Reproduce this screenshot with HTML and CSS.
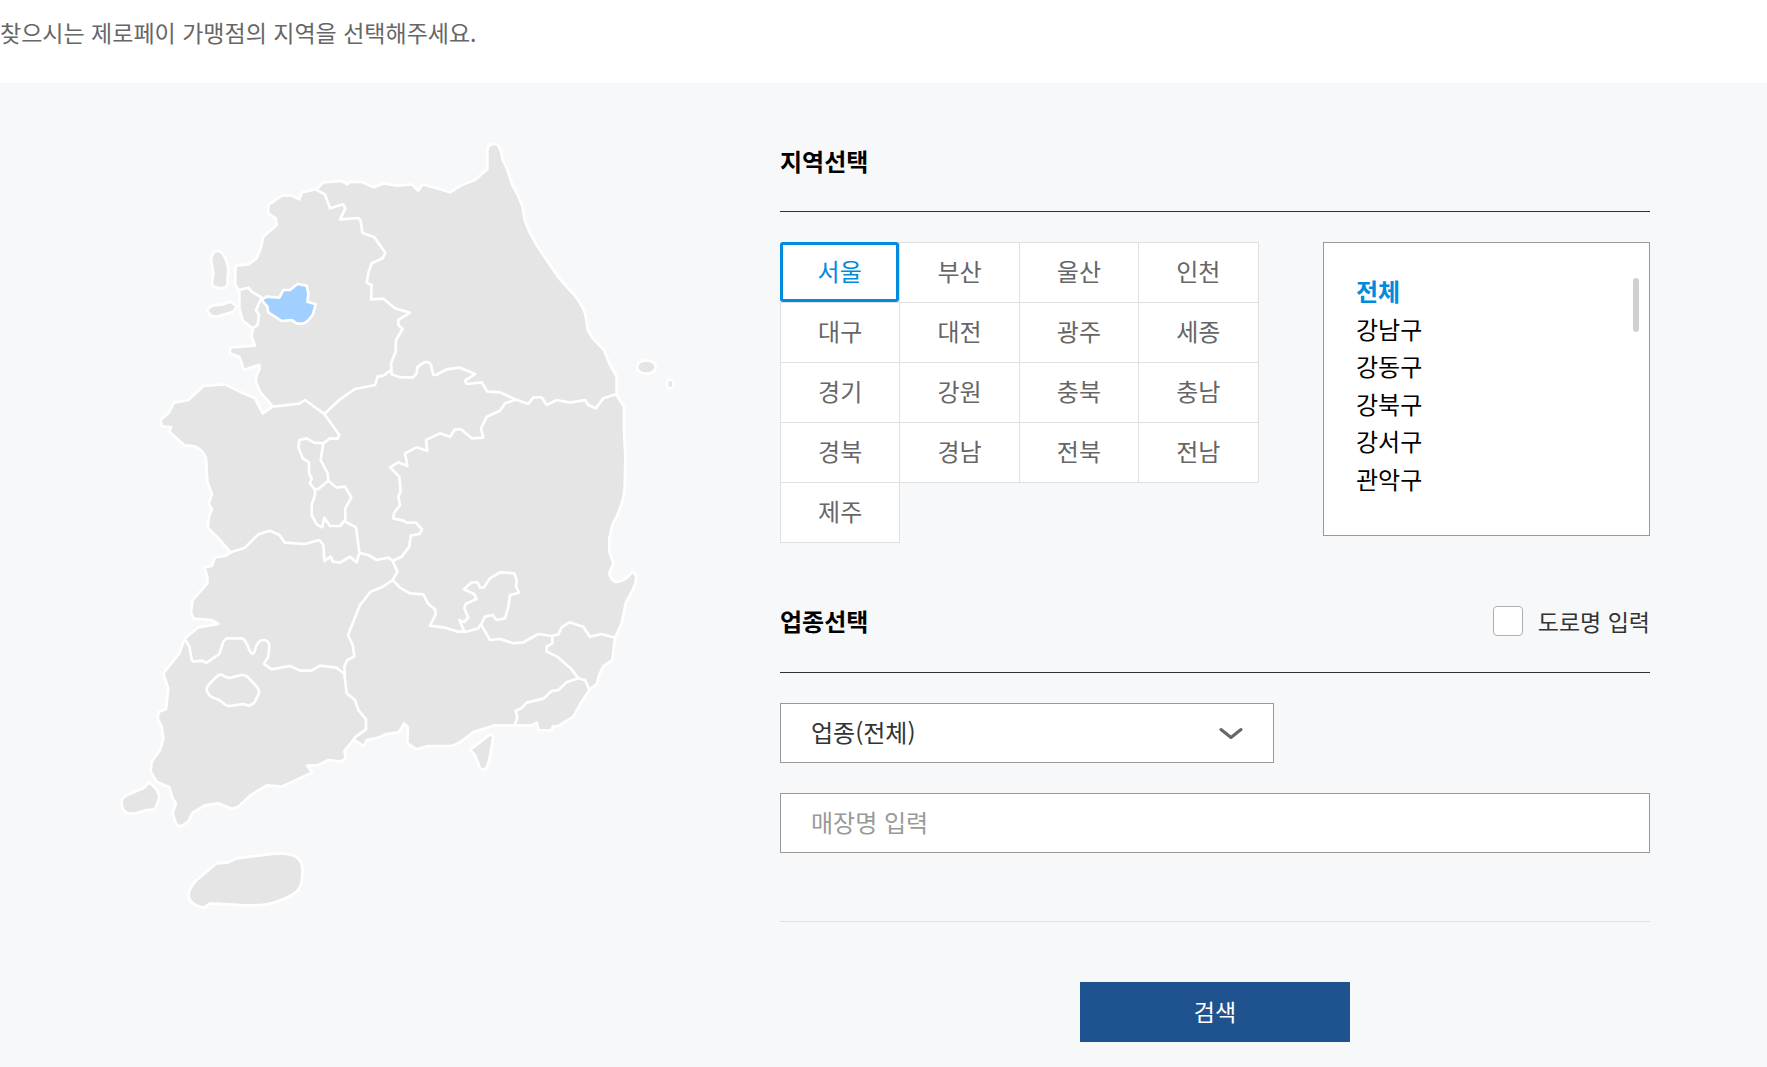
FILE: index.html
```html
<!DOCTYPE html>
<html lang="ko">
<head>
<meta charset="utf-8">
<meta name="viewport" content="width=device-width, initial-scale=1">
<title>제로페이 가맹점 찾기</title>
<link rel="stylesheet" href="styles.css">
</head>
<body>
<p class="intro">찾으시는 제로페이 가맹점의 지역을 선택해주세요.</p>
<main class="finder">
  <svg class="map" viewBox="351 429 1989 2310" role="img" aria-label="전국 지도">
    <!-- mainland -->
    <path class="land" d="M1462 508 1462 450Q1463 438 1472 434L1486 431Q1494 430 1503 455L1508 480 1522 508 1537 555 1552 582 1568 622 1574 660 1588 695 1610 735 1640 780 1675 832 1720 882Q1756 924 1759 960L1763 990 1778 1015 1812 1050 1830 1095 1850 1130 1850 1185 1872 1220 1872 1290 1876 1370 1874 1460Q1872 1512 1838 1572L1828 1615 1828 1655 1840 1690 1828 1720Q1834 1744 1850 1746 1876 1744 1897 1715 1910 1722 1908 1740 1906 1762 1878 1805L1865 1870 1845 1913 1837 1980 1810 1998 1797 2025 1790 2052 1770 2068 1745 2105 1720 2150 1675 2178 1658 2180 1655 2192 1615 2190 1610 2168 1595 2176 1485 2176 1420 2196Q1370 2238 1350 2238L1285 2238 1250 2248 1222 2230 1224 2182 1212 2170 1204 2185 1195 2197 1160 2202 1135 2213 1100 2220 1092 2238 1060 2220 1033 2253 1037 2275 1022 2285 985 2280 955 2295 922 2297 937 2317 845 2360 800 2356 750 2387 715 2420 695 2426 655 2410 615 2416 578 2438 565 2465 542 2480 528 2472 518 2440 528 2410 518 2395 508 2362 470 2345 452 2315 455 2285 480 2250 490 2215 485 2180 473 2155 477 2135 498 2128 505 2065 490 2020 538 1960 555 1915 595 1882 655 1872 635 1860 580 1856 573 1835 578 1800 622 1750 622 1730 613 1702 635 1698 645 1672 675 1668 692 1658 660 1620 623 1582 628 1545 636 1528 626 1510 636 1482 622 1445 618 1375Q602 1332 555 1337L508 1295 513 1282 485 1278 482 1260 505 1240 522 1208 565 1200 595 1172 610 1158 675 1153 720 1175 765 1195 788 1240 818 1220 780 1175 768 1145 770 1125 778 1108 778 1095 755 1102 732 1110 718 1070 688 1060 692 1042 765 1037 755 1010 758 985 728 962 718 925 718 875 705 850 707 797 745 793 770 775 782 745 790 710 830 675 827 655 805 640 805 615 845 587 875 587 898 598 905 577 950 567 970 547 1025 543 1042 553 1050 545 1085 546 1122 562 1152 550 1190 557 1235 553 1255 572 1268 553 1310 565 1350 577 1385 555 1425 540Z"/>
    <!-- province borders -->
    <g class="border">
      <path d="M950 570 975 583 990 625 1030 613 1036 625 1020 658 1075 654 1082 662 1087 698 1123 712 1156 758 1148 775 1115 790 1106 815 1100 848 1115 855 1113 898 1150 896 1185 925 1230 938 1195 960 1195 975 1208 987 1188 1020 1187 1055 1173 1090 1175 1123 1200 1132 1240 1132 1250 1120 1252 1102Q1284 1074 1293 1095L1300 1125 1308 1125 1340 1108 1380 1103 1425 1122 1395 1142 1400 1152 1445 1147 1462 1175 1500 1177 1545 1198 1585 1212 1600 1192 1625 1192 1640 1215 1670 1200 1710 1208 1755 1200 1765 1215 1787 1225 1810 1195 1850 1182"/>
      <path d="M1173 1110 1150 1127 1133 1130 1125 1155 1065 1167 1020 1198 973 1242M818 1220 898 1211 915 1200 973 1242 1018 1305 1013 1316 990 1315 970 1330 962 1380 983 1420 985 1442 955 1467 943 1467 930 1450 935 1435 927 1420 927 1387 908 1375 895 1342 898 1320 920 1315 942 1328 970 1330"/>
      <path d="M985 1442 1010 1463 1035 1460 1054 1492 1036 1525 1036 1560 1020 1578 990 1578 973 1553 967 1582 950 1573 935 1545 935 1515 945 1485 945 1468"/>
      <path d="M1036 1565 1068 1582 1078 1658 1070 1687 1050 1670 1020 1688 998 1685 992 1670 973 1683 970 1635 958 1620 915 1632 855 1628 838 1605 810 1592 775 1603 735 1643 692 1657"/>
      <path d="M1078 1658 1105 1665 1130 1680 1165 1673 1178 1682 1192 1715 1178 1740M1178 1682 1205 1670 1228 1640 1232 1607 1258 1602 1266 1588 1248 1568 1220 1568 1210 1562 1180 1555 1182 1540 1200 1515 1195 1490 1202 1475 1198 1430 1170 1402 1195 1387 1222 1398 1215 1360 1250 1342 1282 1353 1278 1320 1320 1300 1350 1310 1365 1288 1383 1288 1415 1315 1450 1313 1443 1285 1460 1250 1500 1232 1515 1210 1545 1200"/>
      <path d="M1178 1740 1145 1762 1112 1775 1080 1815 1060 1865 1044 1905 1058 1935 1063 1970 1042 1980 1033 2000 1035 2022"/>
      <path d="M1178 1740 1200 1763 1230 1780 1270 1783 1285 1812 1305 1828 1307 1843 1290 1877 1335 1883 1375 1895 1400 1895 1435 1885 1443 1873M1392 1892 1378 1860 1392 1866 1405 1853 1393 1825 1397 1812 1430 1797 1422 1782 1392 1768 1415 1747 1433 1747 1440 1763 1452 1762 1470 1735 1500 1717 1543 1720 1550 1740 1548 1760 1557 1778 1530 1785 1525 1820 1515 1855 1490 1860 1478 1845 1455 1850 1443 1873 1470 1920 1500 1917 1540 1930 1570 1927 1615 1902 1655 1908 1675 1903 1685 1882 1708 1867 1750 1880 1770 1910 1805 1902 1845 1913"/>
      <path d="M1657 1908 1657 1930 1640 1940 1640 1955 1672 1970 1715 2008 1735 2035 1755 2040 1768 2068M1735 2035 1700 2047 1675 2070 1655 2073 1630 2096 1580 2108 1565 2124 1547 2132 1552 2152 1545 2174"/>
      <path d="M555 1917 568 1940 575 1978 580 1985 605 1982 620 1988 658 1962 670 1925 680 1915 725 1915Q738 1920 748 1950 760 1976 768 1940 776 1920 790 1920 808 1920 808 1940L805 1970 792 1992 815 2008 870 1998 900 2012 935 2012 960 1997 1010 2003 1033 2022 1040 2080 1065 2100 1075 2130 1098 2158 1098 2188 1065 2212 1060 2220"/>
      <path d="M620 2068Q620 2060 630 2050L650 2030Q660 2020 670 2027 685 2038 700 2031L725 2025Q738 2024 746 2034L772 2062Q780 2072 775 2084L764 2106Q755 2119 742 2116 730 2110 718 2114L690 2118Q678 2119 668 2108 658 2098 645 2095 628 2090 625 2080 620 2076 620 2068Z"/>
      <path d="M718 870 745 863 755 875 785 892 768 930 777 945 773 975 758 985"/>
    </g>
    <!-- Seoul -->
    <path class="land land-on" d="M785 900 800 890 838 893 850 870 870 870 892 852 920 857 925 880 922 905 947 913 938 945Q918 972 905 971L890 970 875 960 845 963 805 937 802 920Z"/>
    <!-- islands -->
    <path class="land" d="M633 775Q638 754 653 753 668 752 680 785L685 805 682 855Q678 865 665 865 640 864 636 852L640 820Z"/>
    <path class="land" d="M620 930 635 917 670 913 690 905 710 918 700 935 650 950 634 948Z"/>
    <ellipse class="land" cx="1939" cy="1101" rx="28" ry="20"/>
    <ellipse class="land" cx="2011" cy="1152" rx="10" ry="13"/>
    <path class="land" d="M365 2405Q366 2390 390 2381L430 2365 447 2348Q478 2368 478 2395L465 2428 440 2430Q395 2446 380 2438 364 2430 365 2405Z"/>
    <path class="land" d="M1410 2250 1470 2203 1480 2208 1468 2280 1458 2306 1450 2310 1440 2305 1425 2265Z"/>
    <path class="land" d="M566 2685Q568 2662 590 2640L650 2590 685 2587 710 2575 830 2560Q872 2560 887 2570 910 2584 907 2620 906 2660 892 2673 868 2694 820 2708 790 2718 720 2715L630 2710 615 2722Q600 2724 580 2710 566 2702 566 2685Z"/>
  </svg>

  <form class="search">
    <section>
      <div class="section-head"><h2>지역선택</h2></div>
      <div class="region">
        <div class="cities">
          <button type="button" class="city city-on" aria-pressed="true">서울</button>
          <button type="button" class="city">부산</button>
          <button type="button" class="city">울산</button>
          <button type="button" class="city">인천</button>
          <button type="button" class="city">대구</button>
          <button type="button" class="city">대전</button>
          <button type="button" class="city">광주</button>
          <button type="button" class="city">세종</button>
          <button type="button" class="city">경기</button>
          <button type="button" class="city">강원</button>
          <button type="button" class="city">충북</button>
          <button type="button" class="city">충남</button>
          <button type="button" class="city">경북</button>
          <button type="button" class="city">경남</button>
          <button type="button" class="city">전북</button>
          <button type="button" class="city">전남</button>
          <button type="button" class="city">제주</button>
        </div>
        <div class="districts">
          <ul>
            <li><button type="button" class="district district-on">전체</button></li>
            <li><button type="button" class="district">강남구</button></li>
            <li><button type="button" class="district">강동구</button></li>
            <li><button type="button" class="district">강북구</button></li>
            <li><button type="button" class="district">강서구</button></li>
            <li><button type="button" class="district">관악구</button></li>
          </ul>
          <span class="scroll-thumb"></span>
        </div>
      </div>
    </section>

    <section class="category">
      <div class="section-head">
        <h2>업종선택</h2>
        <label class="road"><input type="checkbox">도로명 입력</label>
      </div>
      <div class="select-box">
        <select class="field" aria-label="업종">
          <option>업종(전체)</option>
        </select>
        <svg class="chevron" viewBox="0 0 24 14" aria-hidden="true"><path d="M2 2.500 12 10.500 22 2.500"/></svg>
      </div>
      <input class="field" type="text" placeholder="매장명 입력" aria-label="매장명">
    </section>

    <div class="actions"><button type="submit" class="submit">검색</button></div>
  </form>
</main>
</body>
</html>
```

FILE: styles.css
```css
*, *::before, *::after {
  box-sizing: border-box;
}

body {
  margin: 0;
  min-height: 100vh;
  display: flex;
  flex-direction: column;
  background: #fff;
  color: #000;
  font: 24px/36px "Noto Sans CJK KR", sans-serif;
}

button, input, select {
  font: inherit;
  color: inherit;
}

button {
  padding: 0;
  border: 0;
  background: none;
  cursor: pointer;
}

.intro {
  margin: 0;
  padding: 14px 0 33px;
  color: #666;
  font-size: 23px;
}

.finder {
  flex: 1;
  display: grid;
  grid-template-columns: minmax(0, 663fr) minmax(0, 870fr);
  align-items: start;
  padding: 60px 117px 25px;
  background: #f7f8fa;
}

.map {
  display: block;
  width: 100%;
}

.land {
  fill: #e5e5e5;
  stroke: #fff;
  stroke-width: 8;
  stroke-linejoin: round;
}

.land-on {
  fill: #a1cfff;
}

.border {
  fill: none;
  stroke: #fff;
  stroke-width: 8;
  stroke-linejoin: round;
  stroke-linecap: round;
}

.section-head {
  display: flex;
  justify-content: space-between;
  align-items: center;
  padding-bottom: 32px;
  margin-bottom: 30px;
  border-bottom: 1px solid #333;
}

h2 {
  margin: 0;
  font-size: inherit;
  font-weight: 700;
}

.region {
  display: flex;
  justify-content: space-between;
  align-items: flex-start;
  gap: 24px;
}

.cities {
  width: 55%;
  display: grid;
  grid-template-columns: repeat(4, 1fr);
  grid-auto-rows: 60px;
  padding: 0 1px 1px 0;
}

.city {
  margin: 0 -1px -1px 0;
  padding-bottom: 3px;
  border: 1px solid #e0e0e0;
  background: #fff;
  color: #666;
}

.city-on {
  margin: 0;
  border: 3px solid #008bdc;
  border-radius: 3px;
  color: #008bdc;
  z-index: 1;
}

.districts {
  position: relative;
  width: 327px;
  padding: 30px 32px 37px;
  border: 1px solid #999;
  background: #fff;
}

.districts ul {
  display: grid;
  grid-auto-rows: 1fr;
  height: 225px;
  margin: 0;
  padding: 0;
  list-style: none;
}

.district {
  display: block;
  line-height: 36px;
}

.district-on {
  color: #008bdc;
  font-weight: 700;
}

.scroll-thumb {
  position: absolute;
  top: 35px;
  right: 10px;
  width: 6px;
  height: 54px;
  border-radius: 3px;
  background: #d0d0d0;
}

.category {
  margin-top: 60px;
  padding-bottom: 68px;
  border-bottom: 1px solid #e0e0e0;
}

.category .section-head {
  padding-bottom: 33px;
}

.road {
  display: flex;
  align-items: center;
  gap: 15px;
  color: #333;
  font-size: 23px;
}

.road input {
  appearance: none;
  width: 30px;
  height: 30px;
  margin: 0;
  border: 1px solid #b0b0b0;
  border-radius: 4px;
  background: #fff;
}

.road input:checked {
  background: #008bdc;
}

.field {
  appearance: none;
  display: block;
  width: 100%;
  height: 60px;
  padding: 0 30px 3px;
  border: 1px solid #999;
  border-radius: 0;
  background: #fff;
  color: #333;
}

.field::placeholder {
  color: #999;
  opacity: 1;
}

.select-box {
  position: relative;
  width: 494px;
  max-width: 100%;
  margin-bottom: 30px;
}

.chevron {
  position: absolute;
  top: 24px;
  right: 31px;
  width: 24px;
  height: 14px;
  fill: none;
  stroke: #666;
  stroke-width: 3;
  stroke-linejoin: round;
  stroke-linecap: round;
  pointer-events: none;
}

.actions {
  display: flex;
  justify-content: center;
  margin-top: 60px;
}

.submit {
  width: 270px;
  height: 60px;
  padding-bottom: 3px;
  background: #1f538f;
  color: #fff;
  font-size: 23px;
}
```
